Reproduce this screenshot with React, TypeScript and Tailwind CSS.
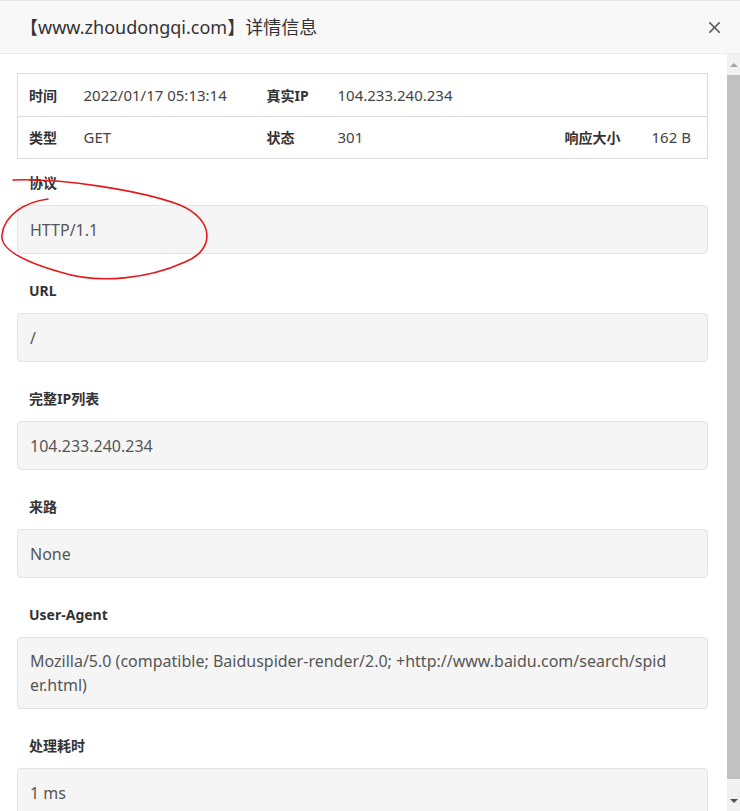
import { X } from 'lucide-react';

const fields: { label: string; value: string; lines?: string[] }[] = [
  { label: '协议', value: 'HTTP/1.1' },
  { label: 'URL', value: '/' },
  { label: '完整IP列表', value: '104.233.240.234' },
  { label: '来路', value: 'None' },
  {
    label: 'User-Agent',
    value: '',
    lines: ['Mozilla/5.0 (compatible; Baiduspider-render/2.0; +http://www.baidu.com/search/spid', 'er.html)'],
  },
  { label: '处理耗时', value: '1 ms' },
];

export default function App() {
  return (
    <div
      className="relative w-[740px] h-[811px] overflow-hidden bg-white flex flex-col text-[#333]"
      style={{ fontFamily: '"Noto Sans", "Noto Sans CJK SC", sans-serif' }}
    >
      {/* 标题栏 */}
      <div className="h-[54px] shrink-0 flex items-center justify-between bg-[#f8f8f8] border-t border-[#e2e2e2] border-b border-b-[#eee] pl-[20px] pr-[16px]">
        <h1 className="text-[18px] font-normal text-[#333]">【www.zhoudongqi.com】详情信息</h1>
        <X className="w-[19px] h-[19px] text-[#555]" strokeWidth={2} />
      </div>

      <div className="flex flex-1 min-h-0">
        {/* 内容 */}
        <div className="flex-1 overflow-hidden pt-[19px] pl-[17px] pr-[19px]">
          <table className="w-full border border-[#ddd] text-[14px] border-collapse">
            <tbody>
              <tr className="h-[43px] border-b border-[#ddd]">
                <td className="w-[66px] pl-[11px] font-bold">时间</td>
                <td className="w-[183px] text-[15px] text-[#444]">2022/01/17 05:13:14</td>
                <td className="w-[71px] font-bold">真实IP</td>
                <td colSpan={3} className="text-[15px] text-[#444]">104.233.240.234</td>
              </tr>
              <tr className="h-[42px]">
                <td className="pl-[11px] font-bold">类型</td>
                <td className="text-[15px] text-[#444]">GET</td>
                <td className="font-bold">状态</td>
                <td className="text-[15px] text-[#444]">301</td>
                <td className="w-[87px] font-bold">响应大小</td>
                <td className="w-[56px] text-[15px] text-[#444]">162 B</td>
              </tr>
            </tbody>
          </table>

          <div className="pt-[14px]">
            {fields.map((f) => (
              <div key={f.label} className="mb-[27px]">
                <div className="h-[20px] leading-[20px] text-[14px] font-bold pl-[12px] mb-[12px]">{f.label}</div>
                {f.lines ? (
                  <div className="bg-[#f5f5f5] border border-[#e3e3e3] rounded-[4px] px-[12px] py-[11px] text-[16px] leading-[24px] text-[#555] whitespace-nowrap">
                    {f.lines.map((l) => (
                      <div key={l}>{l}</div>
                    ))}
                  </div>
                ) : (
                  <div className="h-[49px] flex items-center bg-[#f5f5f5] border border-[#e3e3e3] rounded-[4px] px-[12px] text-[16px] text-[#555]">
                    {f.value}
                  </div>
                )}
              </div>
            ))}
          </div>
        </div>

        {/* 滚动条 */}
        <div className="w-[13px] shrink-0 bg-[#f1f1f1] flex flex-col items-center">
          <div className="h-[21px] flex items-center justify-center">
            <div className="w-0 h-0 border-l-[4px] border-r-[4px] border-b-[4px] border-l-transparent border-r-transparent border-b-[#a3a3a3]" />
          </div>
          <div className="w-[13px] h-[704px] bg-[#c1c1c1]" />
          <div className="flex-1 flex items-end justify-center pb-[8px]">
            <div className="w-0 h-0 border-l-[4px] border-r-[4px] border-t-[4px] border-l-transparent border-r-transparent border-t-[#505050]" />
          </div>
        </div>
      </div>

      {/* 红色手绘圈注 */}
      <svg className="absolute left-0 top-0 pointer-events-none" width="740" height="811">
        <path
          d="M13 180 C 60 178, 140 190, 180 205 C 215 220, 215 250, 185 262 C 150 278, 100 285, 60 272 C 25 262, 0 250, 2 235 C 4 215, 25 202, 48 199"
          fill="none"
          stroke="#e3191c"
          strokeWidth="1.6"
          strokeLinecap="round"
        />
      </svg>
    </div>
  );
}
